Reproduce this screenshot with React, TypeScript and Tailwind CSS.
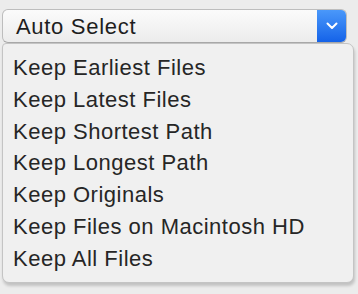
import React from 'react';

const options = [
  'Keep Earliest Files',
  'Keep Latest Files',
  'Keep Shortest Path',
  'Keep Longest Path',
  'Keep Originals',
  'Keep Files on Macintosh HD',
  'Keep All Files',
];

export default function App() {
  return (
    <div
      className="w-[358px] h-[294px] bg-[#ececec] overflow-hidden pt-[9px] pl-[2px]"
      style={{ fontFamily: '"Liberation Sans", Arial, sans-serif' }}
    >
      <div className="flex flex-col w-[352px]">
        <div className="flex w-[345px] h-[34px] rounded-[6px] border border-[#bdbdbd] border-b-[#a8a8a8] bg-gradient-to-b from-[#fbfbfb] to-[#ececec] overflow-hidden">
          <div className="flex-1 flex items-center pl-[13px] text-[22px] tracking-[0.7px] text-[#1e1e1e]">
            Auto Select
          </div>
          <div className="w-[29px] flex items-center justify-center bg-gradient-to-b from-[#4a98fa] to-[#1462e8]">
            <svg width="12" height="8" viewBox="0 0 12 8" fill="none">
              <path d="M1.5 1.5 L6 6 L10.5 1.5" stroke="white" strokeWidth="2" strokeLinecap="round" strokeLinejoin="round" />
            </svg>
          </div>
        </div>
        <div className="w-[352px] h-[240px] rounded-b-[7px] rounded-tr-[7px] rounded-tl-[4px] bg-[#f0f0f0] border border-[#c4c4c4] shadow-[1px_3px_3px_rgba(0,0,0,0.18)] pt-[8px] flex flex-col">
          {options.map((o) => (
            <div key={o} className="h-[31.8px] leading-[31.8px] pl-[10px] text-[22px] tracking-[0.5px] text-[#262626] whitespace-nowrap">
              {o}
            </div>
          ))}
        </div>
      </div>
    </div>
  );
}
